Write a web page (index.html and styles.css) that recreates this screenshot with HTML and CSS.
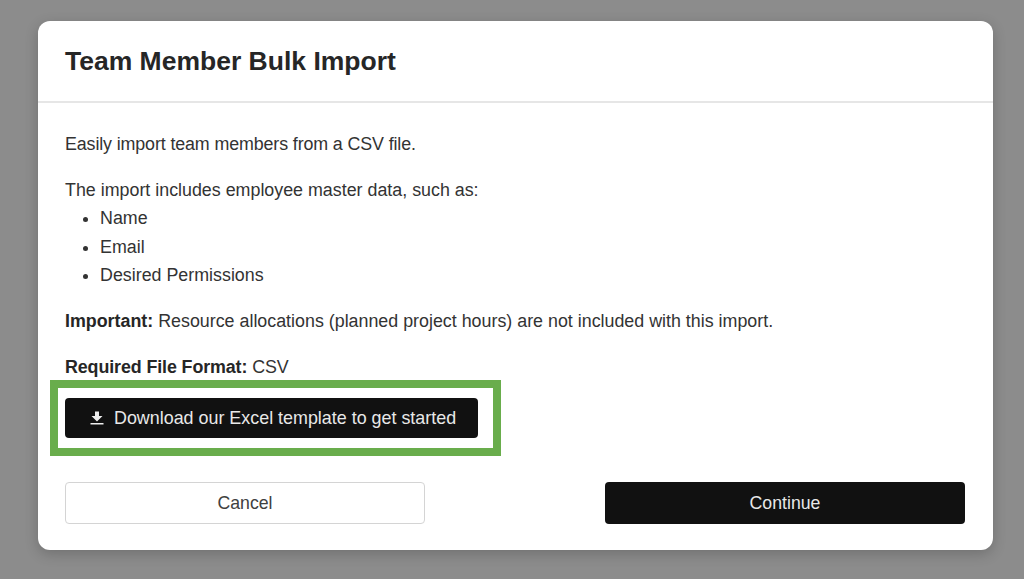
FILE: index.html
```html
<!DOCTYPE html>
<html lang="en">
<head>
<meta charset="UTF-8">
<meta name="viewport" content="width=device-width, initial-scale=1.0">
<title>Team Member Bulk Import</title>
<link rel="stylesheet" href="styles.css">
</head>
<body>

<!-- Import dialog -->
<div class="modal">
  <div class="modal-header">
    <h1>Team Member Bulk Import</h1>
  </div>

  <div class="modal-body">
    <p class="intro">Easily import team members from a CSV file.</p>
    <p class="list-intro">The import includes employee master data, such as:</p>
    <ul>
      <li>Name</li>
      <li>Email</li>
      <li>Desired Permissions</li>
    </ul>
    <p><strong>Important:</strong> Resource allocations (planned project hours) are not included with this import.</p>
    <p class="format"><strong>Required File Format:</strong> CSV</p>

    <!-- Green annotation box round the download button -->
    <div class="highlight">
      <button class="btn btn-dark btn-download">
        <svg class="icon" viewBox="0 0 14 14" width="14" height="14" aria-hidden="true">
          <path d="M5 0.500h4v4.500h3.500L7 10.500 1.500 5H5z"/>
          <rect x="0.500" y="12" width="13" height="1.500"/>
        </svg>
        Download our Excel template to get started
      </button>
    </div>

    <div class="actions">
      <button class="btn btn-light">Cancel</button>
      <button class="btn btn-dark">Continue</button>
    </div>
  </div>
</div>

</body>
</html>
```

FILE: styles.css
```css
/* Page behind the dialog */
body {
  margin: 0;
  height: 579px;
  overflow: hidden;
  background-color: #8c8c8c;
  font-family: "Liberation Sans", Arial, sans-serif;
  color: #333;
}

/* Dialog */
.modal {
  width: 955px;
  height: 529px;
  margin: 21px 0 0 38px;
  background-color: #fff;
  border-radius: 12px;
  box-shadow: 0 4px 14px rgba(0, 0, 0, 0.2);
}

.modal-header {
  height: 80px;
  padding: 0 27px;
  display: flex;
  align-items: center;
  border-bottom: 2px solid #e6e6e6;
}

.modal-header h1 {
  margin: 0;
  font-size: 26.5px;
  font-weight: bold;
  color: #262626;
}

.modal-body {
  padding: 27px 28px 0 27px;
  font-size: 17.85px;
  line-height: 28.2px;
}

.modal-body p {
  margin: 0 0 18px;
}

.modal-body p.intro {
  letter-spacing: -0.12px;
}

.modal-body p.list-intro {
  margin-bottom: 0;
}

.modal-body p.format {
  margin-bottom: 0;
  letter-spacing: -0.1px;
}

.modal-body strong {
  color: #262626;
}

ul {
  margin: 0 0 18px;
  padding-left: 35px;
}

/* Annotation */
.highlight {
  width: 451px;
  height: 76px;
  box-sizing: border-box;
  margin: -1px 0 26px -15px;
  padding: 10px 15px 10px 7px;
  border: 8px solid #69ad4c;
}

/* Buttons */
.btn {
  height: 42px;
  font-family: inherit;
  font-size: 17.7px;
  border-radius: 4px;
  cursor: pointer;
}

.btn-dark {
  background-color: #111;
  color: #e8e8e8;
  border: none;
}

.btn-light {
  background-color: #fff;
  color: #404040;
  border: 1px solid #d4d4d4;
}

.btn-download {
  width: 413px;
  height: 40px;
  padding: 0 0 0 25px;
  display: flex;
  align-items: center;
  gap: 10px;
  font-size: 17.9px;
}

.icon {
  fill: #eee;
}

.actions {
  display: flex;
  justify-content: space-between;
}

.actions .btn {
  width: 360px;
}
```
